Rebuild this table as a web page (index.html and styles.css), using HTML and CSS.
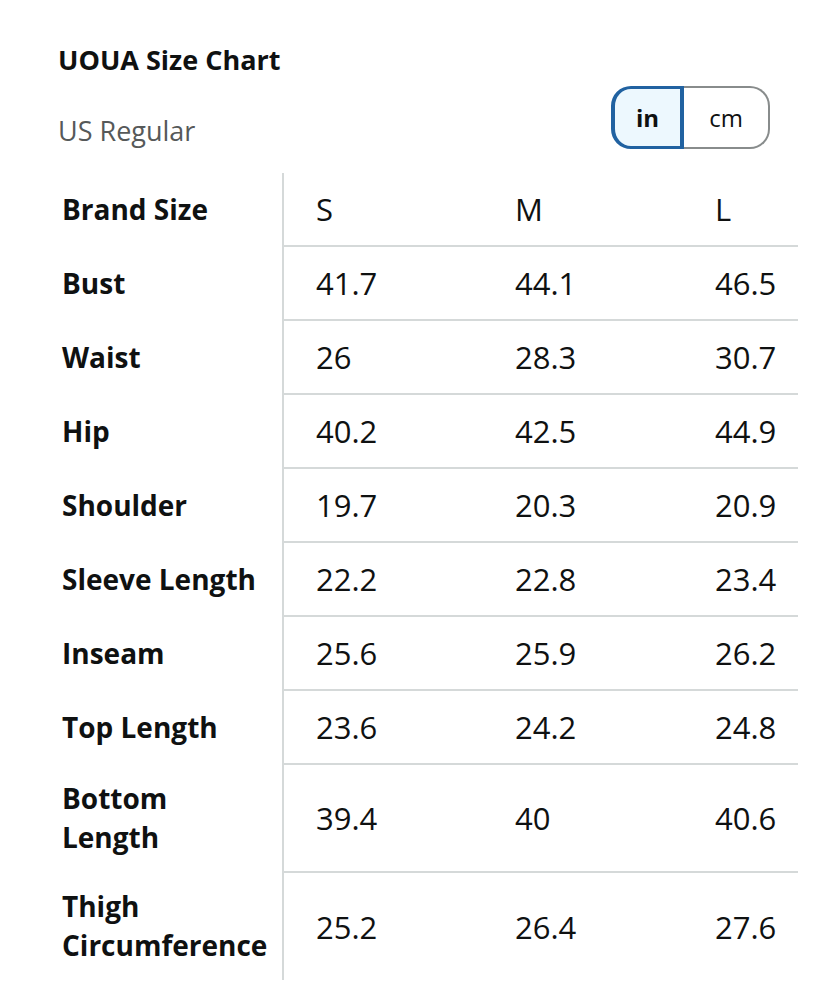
FILE: index.html
```html
<!DOCTYPE html>
<html lang="en">
<head>
<meta charset="utf-8">
<title>UOUA Size Chart</title>
<link rel="stylesheet" href="styles.css">
</head>
<body>
<div class="page">
  <div class="header">
    <div class="titles">
      <h1 class="title">UOUA Size Chart</h1>
      <div class="subtitle">US Regular</div>
    </div>
    <div class="toggle">
      <span class="seg seg-active">in</span>
      <span class="seg seg-idle">cm</span>
    </div>
  </div>
  <div class="table-wrap">
    <table class="chart">
      <tbody>
        <tr><th>Brand Size</th><td>S</td><td>M</td><td>L</td></tr>
        <tr><th>Bust</th><td>41.7</td><td>44.1</td><td>46.5</td></tr>
        <tr><th>Waist</th><td>26</td><td>28.3</td><td>30.7</td></tr>
        <tr><th>Hip</th><td>40.2</td><td>42.5</td><td>44.9</td></tr>
        <tr><th>Shoulder</th><td>19.7</td><td>20.3</td><td>20.9</td></tr>
        <tr><th>Sleeve Length</th><td>22.2</td><td>22.8</td><td>23.4</td></tr>
        <tr><th>Inseam</th><td>25.6</td><td>25.9</td><td>26.2</td></tr>
        <tr><th>Top Length</th><td>23.6</td><td>24.2</td><td>24.8</td></tr>
        <tr><th>Bottom<br>Length</th><td>39.4</td><td>40</td><td>40.6</td></tr>
        <tr class="last"><th>Thigh<br>Circumference</th><td>25.2</td><td>26.4</td><td>27.6</td></tr>
      </tbody>
    </table>
  </div>
</div>
</body>
</html>
```
FILE: styles.css
```css
* { box-sizing: border-box; }
html, body { margin: 0; padding: 0; background: #fff; }
body {
  font-family: "Open Sans", "Noto Sans", sans-serif;
  color: #0f1111;
}
.page {
  padding: 40px 0 0 58px;
  width: 798px;
}
.header {
  display: flex;
  justify-content: space-between;
  align-items: flex-start;
  padding-right: 28px;
}
.title {
  margin: 0;
  font-size: 27px;
  font-weight: 700;
  line-height: 40px;
}
.subtitle {
  margin-top: 34px;
  font-size: 27px;
  line-height: 34px;
  color: #565959;
}
.toggle {
  display: flex;
  margin-top: 46px;
  height: 63px;
}
.seg {
  display: flex;
  align-items: center;
  justify-content: center;
  font-size: 24px;
}
.seg-active {
  width: 73px;
  background: #edf8fe;
  border: 4px solid #2162a1;
  border-width: 3px 4px 3px 4px;
  border-radius: 20px 0 0 20px;
  font-weight: 700;
}
.seg-idle {
  width: 86px;
  border: 2px solid #888c8c;
  border-left: none;
  border-radius: 0 20px 20px 0;
}
.table-wrap {
  margin-top: 24px;
  overflow: hidden;
  width: 740px;
}
.chart {
  border-collapse: collapse;
  table-layout: fixed;
  width: 824px;
}
.chart th {
  width: 225px;
  padding: 15px 4px;
  text-align: left;
  font-size: 28px;
  font-weight: 700;
  line-height: 39px;
  border-right: 2px solid #d5d9d9;
}
.chart td {
  width: 200px;
  padding: 15px 0 15px 32px;
  font-size: 31px;
  line-height: 42px;
  border-bottom: 2px solid #d5d9d9;
}
.chart tr.last td { border-bottom: none; }
```
